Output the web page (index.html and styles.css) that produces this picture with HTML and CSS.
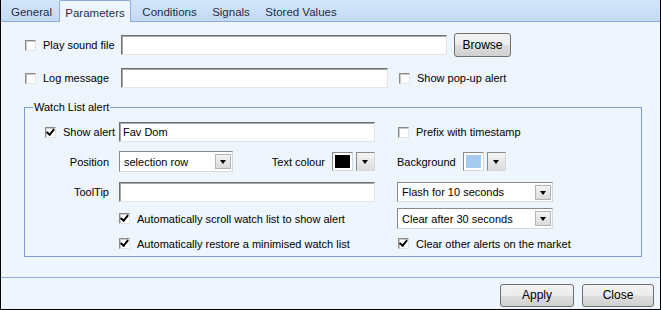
FILE: index.html
```html
<!DOCTYPE html>
<html lang="en">

<head>
    <meta charset="UTF-8">
    <title>Alert Parameters</title>
    <link rel="stylesheet" href="styles.css">
</head>

<body>
    <div class="window">
        <!-- Tab strip -->
        <div class="tabs">
            <span class="tab t-general">General</span>
            <span class="tab t-params selected">Parameters</span>
            <span class="tab t-cond">Conditions</span>
            <span class="tab t-sig">Signals</span>
            <span class="tab t-stored">Stored Values</span>
        </div>

        <div class="page">
            <div class="row row-sound">
                <label class="lead"><span class="check"></span>Play sound file</label>
                <span class="field w-sound"></span>
                <span class="button browse">Browse</span>
            </div>

            <div class="row row-log">
                <label class="lead"><span class="check"></span>Log message</label>
                <span class="field w-log"></span>
                <label class="side"><span class="check"></span>Show pop-up alert</label>
            </div>

            <!-- Watch list group -->
            <fieldset class="group">
                <legend>Watch List alert</legend>

                <div class="grow grow-show">
                    <label class="cell-left indent"><span class="check checked"></span>Show alert</label>
                    <span class="field w-mid">Fav Dom</span>
                    <label class="cell-right"><span class="check"></span>Prefix with timestamp</label>
                </div>

                <div class="grow grow-pos">
                    <span class="cell-left label">Position</span>
                    <div class="mid">
                        <span class="combo w-pos">selection row<span class="drop"></span></span>
                        <span class="colour-group">
                            <span class="colour-label">Text colour</span>
                            <span class="swatch"><span class="fill" style="background:#000000"></span></span>
                            <span class="drop boxed"></span>
                        </span>
                    </div>
                    <span class="cell-right">
                        <span class="colour-label">Background</span>
                        <span class="swatch"><span class="fill" style="background:#a6cbef"></span></span>
                        <span class="drop boxed"></span>
                    </span>
                </div>

                <div class="grow grow-tip">
                    <span class="cell-left label">ToolTip</span>
                    <span class="field w-mid"></span>
                    <span class="cell-right"><span class="combo w-right">Flash for 10 seconds<span class="drop"></span></span></span>
                </div>

                <div class="grow grow-scroll">
                    <span class="cell-left"></span>
                    <label class="mid"><span class="check checked"></span>Automatically scroll watch list to show alert</label>
                    <span class="cell-right"><span class="combo w-right">Clear after 30 seconds<span class="drop"></span></span></span>
                </div>

                <div class="grow grow-restore">
                    <span class="cell-left"></span>
                    <label class="mid"><span class="check checked"></span>Automatically restore a minimised watch list</label>
                    <label class="cell-right"><span class="check checked"></span>Clear other alerts on the market</label>
                </div>
            </fieldset>
        </div>

        <div class="footer">
            <span class="button apply">Apply</span>
            <span class="button close">Close</span>
        </div>
    </div>
</body>

</html>
```

FILE: styles.css
```css
body {
    margin: 0;
    font-family: "Liberation Sans", Arial, sans-serif;
    font-size: 11px;
    color: #000;
}

.window {
    width: 661px;
    height: 310px;
    box-sizing: border-box;
    border: 1px solid #000;
    border-top: none;
    background-color: #eff5fd;
    display: flex;
    flex-direction: column;
    white-space: nowrap;
}

/* Tabs */
.tabs {
    height: 21px;
    display: flex;
    align-items: flex-end;
    padding-left: 3px;
    background: linear-gradient(#d3e5f9, #c4daf4);
    border-bottom: 1px solid #8daed9;
}

.tab {
    height: 20px;
    box-sizing: border-box;
    padding-top: 5px;
    text-align: center;
    color: #1d2e47;
    font-size: 11.5px;
}

.tab.selected {
    height: 22px;
    margin-bottom: -1px;
    padding-top: 6px;
    background-color: #eff5fd;
    border: 1px solid #8daed9;
    border-bottom: none;
    border-radius: 2px 2px 0 0;
}

.t-general {
    width: 55px;
}

.t-params {
    width: 72px;
}

.t-cond {
    width: 77px;
}

.t-sig {
    width: 46px;
}

.t-stored {
    width: 94px;
}

/* Page */
.page {
    flex: 1;
}

.row {
    display: flex;
    align-items: center;
}

.row-sound {
    height: 24px;
    margin-top: 11px;
    padding-left: 23px;
}

.row-log {
    height: 20px;
    margin-top: 11px;
    padding-left: 23px;
}

.lead {
    width: 97px;
    display: flex;
    align-items: center;
}

.side {
    display: flex;
    align-items: center;
    margin-left: 10px;
}

.check {
    width: 11px;
    height: 11px;
    box-sizing: border-box;
    border: 1px solid;
    border-color: #8a8a8a #e2e2e2 #e2e2e2 #8a8a8a;
    background-color: #fff;
    box-shadow: inset 1px 1px 0 #c9c9c9;
    margin: 0 7px 0 1px;
    flex-shrink: 0;
    position: relative;
}

.check.checked::after {
    content: "";
    position: absolute;
    left: 1px;
    top: 0;
    width: 6px;
    height: 3px;
    border-left: 2px solid #000;
    border-bottom: 2px solid #000;
    transform: translate(0, 2px) rotate(-50deg);
    transform-origin: 30% 50%;
}

.field {
    height: 20px;
    box-sizing: border-box;
    border: 1px solid;
    border-color: #6f6f6f #e4e4e4 #e4e4e4 #6f6f6f;
    box-shadow: inset 1px 1px 0 #a9a9a9;
    background-color: #fff;
    padding: 2px 3px;
    line-height: 15px;
}

.w-sound {
    width: 326px;
}

.w-log {
    width: 267px;
}

.w-mid {
    width: 256px;
}

.button {
    box-sizing: border-box;
    border: 1px solid #707070;
    border-radius: 3px;
    background: linear-gradient(#f3f3f3 0%, #ebebeb 50%, #dddddd 51%, #d0d0d0 100%);
    text-align: center;
    font-size: 12px;
}

.browse {
    width: 57px;
    height: 24px;
    line-height: 22px;
    margin-left: 7px;
}

/* Group box */
.group {
    margin: 13px 18px 0 23px;
    padding: 0 0 4px 0;
    border: 1px solid #7c9dd1;
}

.group legend {
    margin-left: 8px;
    padding: 0 1px;
}

.grow {
    display: flex;
    align-items: center;
}

.grow-show {
    height: 20px;
    margin-top: 9px;
}

.grow-pos {
    height: 21px;
    margin-top: 9px;
}

.grow-tip {
    height: 20px;
    margin-top: 10px;
}

.grow-scroll {
    height: 21px;
    margin-top: 6px;
}

.grow-restore {
    height: 17px;
    margin-top: 6px;
}

.cell-left {
    width: 94px;
    flex-shrink: 0;
    display: flex;
    align-items: center;
}

.cell-left.indent {
    padding-left: 19px;
    box-sizing: border-box;
}

.cell-left.label {
    justify-content: flex-end;
    padding-right: 10px;
    box-sizing: border-box;
}

.mid {
    width: 256px;
    display: flex;
    align-items: center;
}

.mid .check {
    margin-left: 0;
}

.cell-right {
    margin-left: 22px;
    display: flex;
    align-items: center;
}

.combo {
    height: 21px;
    box-sizing: border-box;
    border: 1px solid;
    border-color: #8a8a8a #d8d8d8 #d8d8d8 #8a8a8a;
    background-color: #fff;
    display: flex;
    align-items: center;
    justify-content: space-between;
    padding: 0 1px 0 4px;
}

.grow-tip .combo {
    height: 20px;
}

.w-pos {
    width: 114px;
}

.w-right {
    width: 156px;
}

.drop {
    width: 16px;
    height: 15px;
    box-sizing: border-box;
    border: 1px solid #b4b4b4;
    background: linear-gradient(#f4f4f4, #dadada);
    position: relative;
}

.drop::after {
    content: "";
    position: absolute;
    left: 4px;
    top: 5px;
    border-left: 3px solid transparent;
    border-right: 3px solid transparent;
    border-top: 4px solid #000;
}

.drop.boxed {
    width: 19px;
    height: 19px;
    border: 1px solid;
    border-color: #8a8a8a #d8d8d8 #d8d8d8 #8a8a8a;
    background: linear-gradient(#f4f4f4, #dcdcdc);
    margin-left: 3px;
}

.drop.boxed::after {
    left: 5px;
    top: 7px;
}

.colour-group {
    margin-left: auto;
    display: flex;
    align-items: center;
}

.colour-label {
    margin-right: 7px;
}

.swatch {
    width: 21px;
    height: 19px;
    box-sizing: border-box;
    border: 1px solid;
    border-color: #8a8a8a #d8d8d8 #d8d8d8 #8a8a8a;
    background-color: #fff;
    padding: 2px;
    display: flex;
}

.fill {
    flex: 1;
}

/* Footer */
.footer {
    border-top: 1px solid #8daed9;
    height: 32px;
    display: flex;
    justify-content: flex-end;
    align-items: flex-start;
    padding: 6px 6px 0 0;
    box-sizing: border-box;
}

.apply {
    width: 74px;
    height: 23px;
    line-height: 21px;
}

.close {
    width: 72px;
    height: 23px;
    line-height: 21px;
    margin-left: 8px;
}
```
